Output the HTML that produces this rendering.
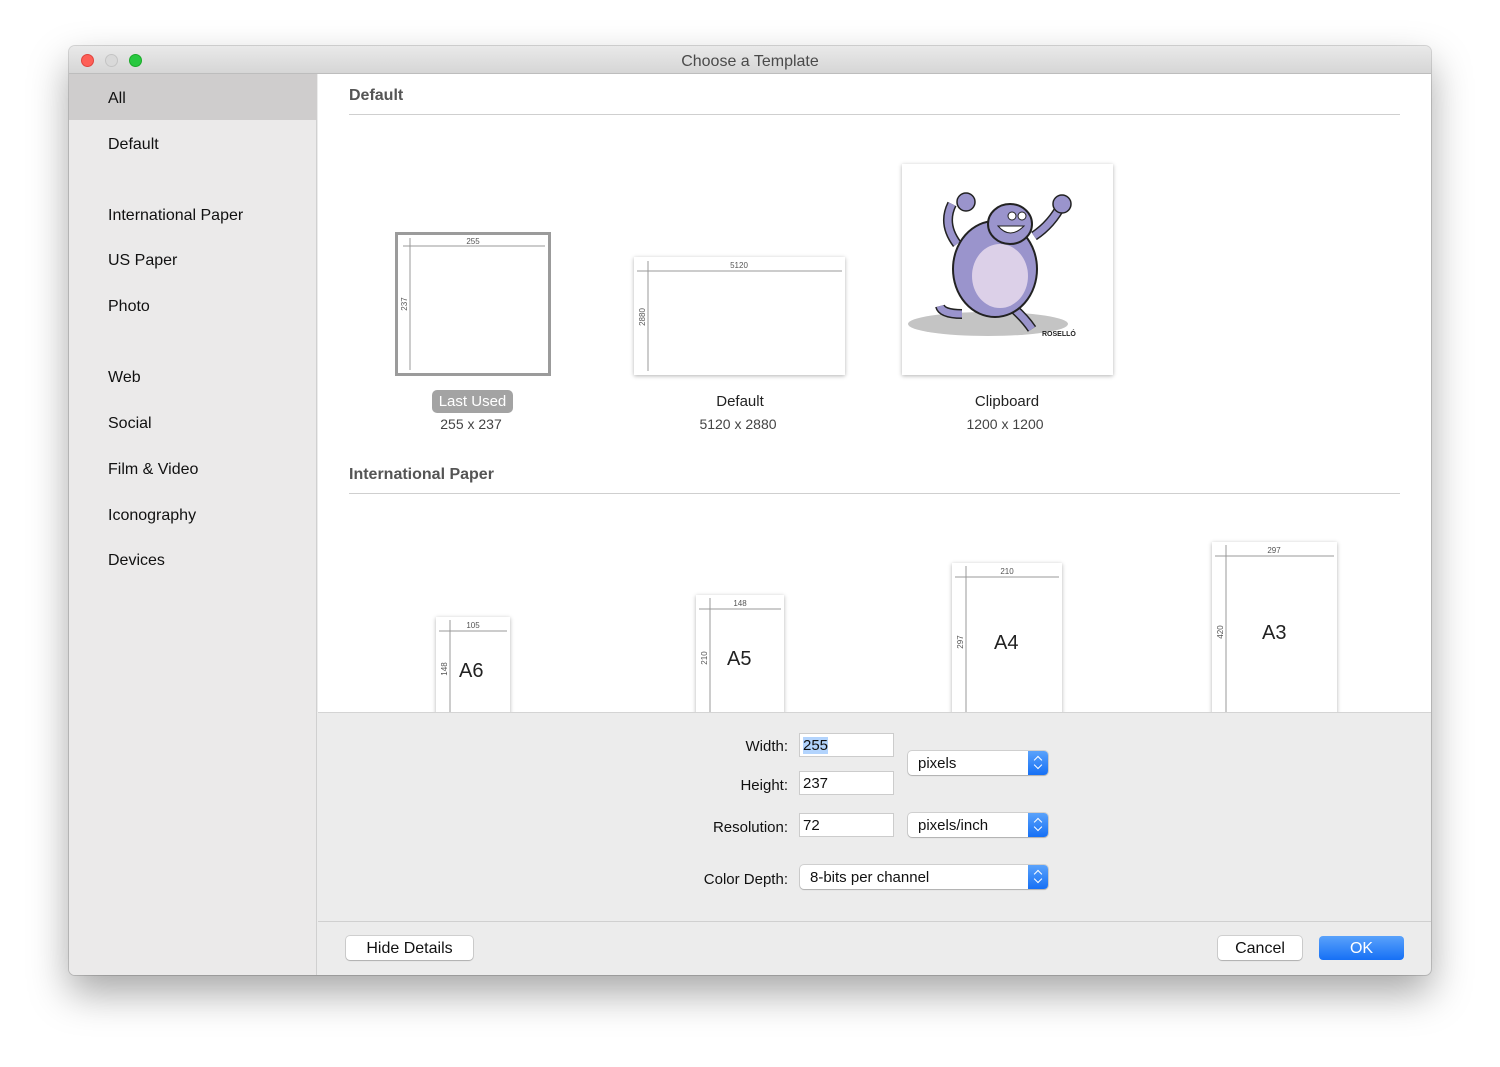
<!DOCTYPE html>
<html><head><meta charset="utf-8"><style>
*{margin:0;padding:0;box-sizing:border-box}
body{width:1500px;height:1067px;background:#fff;font-family:"Liberation Sans",sans-serif;position:relative;overflow:hidden}
.a{position:absolute}
.win{left:69px;top:46px;width:1362px;height:929px;border-radius:6px;background:#ececec;box-shadow:0 18px 40px rgba(0,0,0,.35),0 0 0 1px rgba(0,0,0,.15);overflow:hidden}
.tb{left:0;top:0;width:1362px;height:28px;background:linear-gradient(#e9e9e9,#d6d6d6);border-bottom:1px solid #bdbdbd;text-align:center;font-size:16px;line-height:31px;color:#4a4a4a}
.dot{top:8px;width:13px;height:13px;border-radius:50%}
.side{left:0;top:28px;width:248px;height:901px;background:#ebeaea;border-right:1px solid #d0d0d0}
.si{left:39px;font-size:16px;color:#111}
.main{left:249px;top:28px;width:1113px;height:638px;background:#fff;overflow:hidden}
.hd{font-size:16px;font-weight:bold;color:#555}
.hr{height:1px;background:#cfcfcf}
.pap{background:#fff;box-shadow:0 1px 4px rgba(0,0,0,.3)}
.cap{font-size:15px;color:#222;text-align:center;width:240px}
.sub{font-size:14px;color:#444;text-align:center;width:240px}
.lbl{font-size:15px;color:#111;text-align:right;width:160px}
.fld{background:#fff;border:1px solid #ccc;height:24px;font-size:15px;line-height:24px;padding-left:3px;color:#111}
.pop{background:#fff;border-radius:4px;box-shadow:0 0 0 1px rgba(0,0,0,.12),0 1px 1px rgba(0,0,0,.15);height:24px;font-size:15px;line-height:26px;padding-left:10px;color:#111}
.pop i{position:absolute;right:0;top:0;width:20px;height:24px;background:linear-gradient(#5aa2fb,#1670f5);border-radius:0 4px 4px 0}
.pop i:before,.pop i:after{content:"";position:absolute;left:7px;width:5px;height:5px;border-left:1.5px solid #fff;border-top:1.5px solid #fff}
.pop i:before{top:6px;transform:rotate(45deg)}
.pop i:after{top:11px;transform:rotate(225deg)}
.btn{background:#fff;border-radius:4px;box-shadow:0 0 0 1px rgba(0,0,0,.12),0 1px 1px rgba(0,0,0,.15);height:24px;font-size:16px;line-height:26px;text-align:center;color:#111}
</style></head><body>
<div class="a win">
 <div class="a tb">Choose a Template</div>
 <div class="a dot" style="left:12px;background:#fe5f57;border:1px solid #e0443e"></div>
 <div class="a dot" style="left:36px;background:#d9d9d9;border:1px solid #c4c4c4"></div>
 <div class="a dot" style="left:60px;background:#28c840;border:1px solid #1aab29"></div>
 <div class="a side">
  <div class="a" style="left:0;top:0;width:248px;height:46px;background:#cfcdcd"></div>
  <div class="a si" style="top:16px">All</div>
  <div class="a si" style="top:62px">Default</div>
  <div class="a si" style="top:133px">International Paper</div>
  <div class="a si" style="top:178px">US Paper</div>
  <div class="a si" style="top:224px">Photo</div>
  <div class="a si" style="top:295px">Web</div>
  <div class="a si" style="top:341px">Social</div>
  <div class="a si" style="top:387px">Film &amp; Video</div>
  <div class="a si" style="top:433px">Iconography</div>
  <div class="a si" style="top:478px">Devices</div>
 </div>
 <div class="a main">
  <div class="a hd" style="left:31px;top:13px">Default</div>
  <div class="a hr" style="left:31px;top:40px;width:1051px"></div>
  <div class="a" style="left:77px;top:158px;width:156px;height:144px;border:3px solid #9b9b9b;background:#fff"></div>
  <svg class="a" style="left:77px;top:158px" width="156" height="144" font-family="Liberation Sans" font-size="8" fill="#555">
   <line x1="8" y1="14" x2="150" y2="14" stroke="#999"/><line x1="15" y1="6" x2="15" y2="138" stroke="#999"/>
   <text x="78" y="12" text-anchor="middle">255</text>
   <text x="12" y="72" text-anchor="middle" transform="rotate(-90 12 72)">237</text>
  </svg>
  <div class="a" style="left:114px;top:316px;width:81px;height:23px;background:#a3a3a3;border-radius:5px;color:#fff;font-size:15px;line-height:23px;text-align:center">Last Used</div>
  <div class="a sub" style="left:33px;top:342px">255 x 237</div>
  <div class="a pap" style="left:316px;top:183px;width:211px;height:118px"></div>
  <svg class="a" style="left:316px;top:183px" width="211" height="118" font-family="Liberation Sans" font-size="8" fill="#555">
   <line x1="3" y1="14" x2="208" y2="14" stroke="#999"/><line x1="14" y1="4" x2="14" y2="114" stroke="#999"/>
   <text x="105" y="11" text-anchor="middle">5120</text>
   <text x="11" y="60" text-anchor="middle" transform="rotate(-90 11 60)">2880</text>
  </svg>
  <div class="a cap" style="left:302px;top:319px">Default</div>
  <div class="a sub" style="left:300px;top:342px">5120 x 2880</div>
  <div class="a pap" style="left:584px;top:90px;width:211px;height:211px"></div>
  <svg class="a" style="left:584px;top:90px" width="211" height="211">
   <ellipse cx="86" cy="160" rx="80" ry="12" fill="#c4c4c4"/>
   <path d="M60 150 Q40 150 38 142 M100 135 Q120 150 130 165" stroke="#222" stroke-width="10" fill="none"/>
   <path d="M60 150 Q40 150 38 142 M100 135 Q120 150 130 165" stroke="#9a94cc" stroke-width="7" fill="none"/>
   <path d="M55 80 Q40 60 50 40 M132 72 Q150 60 160 40" stroke="#222" stroke-width="10" fill="none"/>
   <path d="M55 80 Q40 60 50 40 M132 72 Q150 60 160 40" stroke="#9a94cc" stroke-width="7" fill="none"/>
   <circle cx="64" cy="38" r="9" fill="#9a94cc" stroke="#222" stroke-width="1.5"/>
   <circle cx="160" cy="40" r="9" fill="#9a94cc" stroke="#222" stroke-width="1.5"/>
   <ellipse cx="93" cy="105" rx="42" ry="48" fill="#9a94cc" stroke="#222" stroke-width="2"/>
   <ellipse cx="98" cy="112" rx="28" ry="32" fill="#dcd0e8"/>
   <ellipse cx="108" cy="60" rx="22" ry="20" fill="#9a94cc" stroke="#222" stroke-width="2"/>
   <path d="M96 62 Q108 76 122 62 Z" fill="#fff" stroke="#222"/>
   <circle cx="110" cy="52" r="4" fill="#fff" stroke="#222"/><circle cx="120" cy="52" r="4" fill="#fff" stroke="#222"/>
   <text x="140" y="172" font-size="7" font-family="Liberation Sans" font-weight="bold" fill="#222">ROSELLÓ</text>
  </svg>
  <div class="a cap" style="left:569px;top:319px">Clipboard</div>
  <div class="a sub" style="left:567px;top:342px">1200 x 1200</div>
  <div class="a hd" style="left:31px;top:392px">International Paper</div>
  <div class="a hr" style="left:31px;top:419px;width:1051px"></div>
  <div class="a pap" style="left:118px;top:543px;width:74px;height:120px"></div>
  <svg class="a" style="left:118px;top:543px" width="74" height="100" font-family="Liberation Sans" fill="#555">
   <line x1="3" y1="14" x2="71" y2="14" stroke="#999"/><line x1="14" y1="3" x2="14" y2="100" stroke="#999"/>
   <text x="37" y="11" font-size="8" text-anchor="middle">105</text>
   <text x="11" y="52" font-size="8" text-anchor="middle" transform="rotate(-90 11 52)">148</text>
   <text x="23" y="60" font-size="20" fill="#222">A6</text>
  </svg>
  <div class="a pap" style="left:378px;top:521px;width:88px;height:140px"></div>
  <svg class="a" style="left:378px;top:521px" width="88" height="120" font-family="Liberation Sans" fill="#555">
   <line x1="3" y1="14" x2="85" y2="14" stroke="#999"/><line x1="14" y1="3" x2="14" y2="120" stroke="#999"/>
   <text x="44" y="11" font-size="8" text-anchor="middle">148</text>
   <text x="11" y="63" font-size="8" text-anchor="middle" transform="rotate(-90 11 63)">210</text>
   <text x="31" y="70" font-size="20" fill="#222">A5</text>
  </svg>
  <div class="a pap" style="left:634px;top:489px;width:110px;height:170px"></div>
  <svg class="a" style="left:634px;top:489px" width="110" height="150" font-family="Liberation Sans" fill="#555">
   <line x1="3" y1="14" x2="107" y2="14" stroke="#999"/><line x1="14" y1="3" x2="14" y2="150" stroke="#999"/>
   <text x="55" y="11" font-size="8" text-anchor="middle">210</text>
   <text x="11" y="79" font-size="8" text-anchor="middle" transform="rotate(-90 11 79)">297</text>
   <text x="42" y="86" font-size="20" fill="#222">A4</text>
  </svg>
  <div class="a pap" style="left:894px;top:468px;width:125px;height:190px"></div>
  <svg class="a" style="left:894px;top:468px" width="125" height="170" font-family="Liberation Sans" fill="#555">
   <line x1="3" y1="14" x2="122" y2="14" stroke="#999"/><line x1="14" y1="3" x2="14" y2="170" stroke="#999"/>
   <text x="62" y="11" font-size="8" text-anchor="middle">297</text>
   <text x="11" y="90" font-size="8" text-anchor="middle" transform="rotate(-90 11 90)">420</text>
   <text x="50" y="97" font-size="20" fill="#222">A3</text>
  </svg>
 </div>
 <div class="a" style="left:249px;top:666px;width:1113px;height:1px;background:#d4d4d4"></div>
 <div class="a lbl" style="left:559px;top:692px">Width:</div>
 <div class="a fld" style="left:730px;top:687px;width:95px"><span style="background:#b3d4fd">255</span></div>
 <div class="a lbl" style="left:559px;top:731px">Height:</div>
 <div class="a fld" style="left:730px;top:725px;width:95px">237</div>
 <div class="a lbl" style="left:559px;top:773px">Resolution:</div>
 <div class="a fld" style="left:730px;top:767px;width:95px">72</div>
 <div class="a pop" style="left:839px;top:705px;width:140px">pixels<i></i></div>
 <div class="a pop" style="left:839px;top:767px;width:140px">pixels/inch<i></i></div>
 <div class="a lbl" style="left:559px;top:825px">Color Depth:</div>
 <div class="a pop" style="left:731px;top:819px;width:248px">8-bits per channel<i></i></div>
 <div class="a" style="left:249px;top:875px;width:1113px;height:1px;background:#d0d0d0"></div>
 <div class="a btn" style="left:277px;top:890px;width:127px">Hide Details</div>
 <div class="a btn" style="left:1149px;top:890px;width:84px">Cancel</div>
 <div class="a btn" style="left:1250px;top:890px;width:85px;background:linear-gradient(#5aa2fb,#1670f5);color:#fff;box-shadow:none">OK</div>
</div>
</body></html>
